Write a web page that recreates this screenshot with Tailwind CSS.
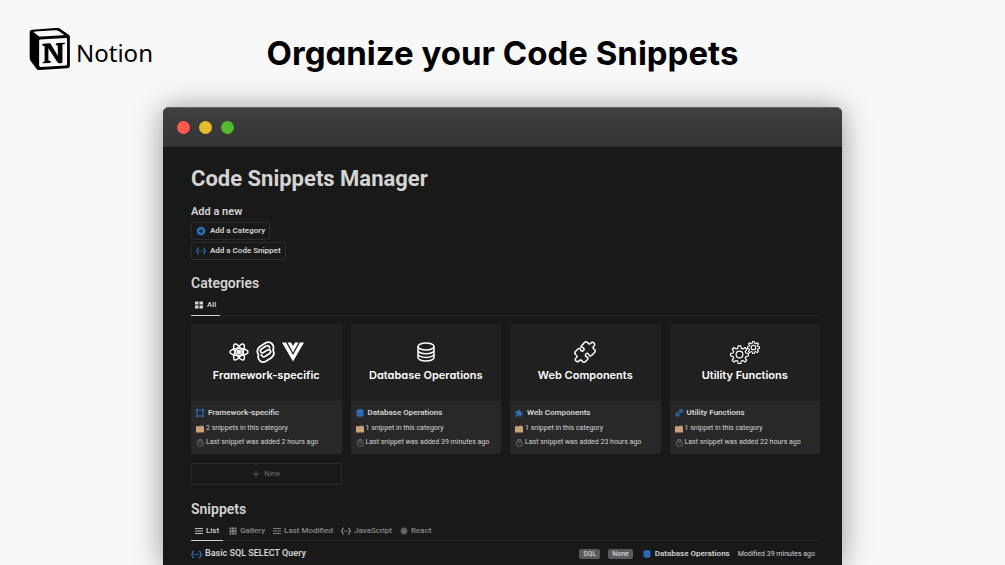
<!DOCTYPE html>
<html lang="en">
  <head>
    <meta charset="UTF-8" />
    <meta name="viewport" content="width=device-width, initial-scale=1.0" />
    <title>Organize your Code Snippets</title>
    <script src="https://cdn.jsdelivr.net/npm/@tailwindcss/browser@4"></script>
  </head>
  <body class="flex h-screen flex-col overflow-hidden bg-[#f8f8f8] font-['Roboto',sans-serif]">
    <!-- Shared icons -->
    <svg class="hidden">
      <symbol id="code" viewBox="0 0 20 16" fill="none" stroke="currentColor" stroke-width="2.400" stroke-linecap="round">
        <path d="M5 2C2 2 4 7 1 8c3 1 1 6 4 6M15 2c3 0 1 5 4 6-3 1-1 6-4 6M6.500 8h.5M10 8h.1M13 8h.5" />
      </symbol>
      <symbol id="list" viewBox="0 0 16 16" stroke="currentColor" stroke-width="1.800">
        <path d="M0 3h16M0 8h16M0 13h16" />
      </symbol>
      <symbol id="react" viewBox="0 0 32 32" fill="none" stroke="currentColor" stroke-width="2.400">
        <ellipse cx="16" cy="16" rx="14.500" ry="5.500" />
        <ellipse cx="16" cy="16" rx="14.500" ry="5.500" transform="rotate(60 16 16)" />
        <ellipse cx="16" cy="16" rx="14.500" ry="5.500" transform="rotate(120 16 16)" />
        <circle cx="16" cy="16" r="2.500" fill="currentColor" />
      </symbol>
      <symbol id="database" viewBox="0 0 18 20" fill="none" stroke="currentColor" stroke-width="1.500">
        <ellipse cx="9" cy="4.500" rx="8" ry="3.500" />
        <path d="M1 4.500v11C1 17.500 4.500 19 9 19s8-1.500 8-3.500v-11M1 8.200c0 2 3.500 3.500 8 3.500s8-1.500 8-3.500M1 11.900c0 2 3.500 3.500 8 3.500s8-1.500 8-3.500" />
      </symbol>
      <symbol id="database-solid" viewBox="0 0 14 16" fill="currentColor">
        <path d="M0 3c0-3.500 14-3.500 14 0v10c0 3.500-14 3.500-14 0z" />
      </symbol>
      <symbol id="puzzle" viewBox="0 0 24 24">
        <path d="M8 7c-2-7 8-7 6 0h5v5c6-2 6 8 0 6v5h-6c1-6-6-6-5 0H2v-5c4 1 4-7-1-6V7z" />
      </symbol>
      <symbol id="gear" viewBox="0 0 24 24" fill="none" stroke="currentColor" stroke-linejoin="round">
        <path d="M10.300 1h3.400l.6 3.200 2 .8L19 3.200 21.200 5.400 19.300 8.100l.8 2 3.100.5v3.300l-3.100.6-.8 2 1.900 2.700-2.300 2.300-2.700-1.900-2 .8-.5 3.100h-3.400l-.6-3.100-2-.8L5 21.500l-2.300-2.300 1.900-2.700-.8-2-3-.6v-3.300l3-.5.8-2L2.800 5.400 5 3.200 7.700 5l2-.8z" />
        <circle cx="12" cy="12" r="4.300" />
      </symbol>
      <symbol id="folder" viewBox="0 0 16 16">
        <path d="M1 2h5l1 1h2V1h5l1 3v3H1z" fill="#a58560" />
        <rect y="3" width="16" height="12" rx="1" fill="#c9a27a" />
      </symbol>
      <symbol id="clock" viewBox="0 0 16 16" fill="none" stroke="#777777" stroke-width="1.500">
        <rect x="3" y="4" width="11" height="10" rx="2" />
        <path d="M6 4V1h5v3M6 8h5" />
      </symbol>
    </svg>

    <!-- Page header -->
    <header class="grid h-[107px] shrink-0 grid-cols-[1fr_auto_1fr] items-center">
      <a href="#" class="flex items-center gap-[6px] self-start pt-7 pl-7 text-black">
        <svg class="h-[42px] w-[42px]" viewBox="0 0 100 100">
          <path d="M6 4.300 61.400.2c6.800-.6 8.500-.2 12.800 2.900l17.600 12.400c2.900 2.200 3.900 2.800 3.900 5.100v68.200c0 4.300-1.600 6.800-7 7.200l-64.300 3.900c-4.100.2-6-.4-8.200-3.100L3.200 79.900C.9 76.800 0 74.400 0 71.700V11.100C0 7.600 1.600 4.700 6 4.300" transform="translate(4 0)" />
          <path d="M29 27.500 89 23.800c3-.2 4 1 4 3.200v59c0 2-1 3-3 3.200L31 92.700c-3 .2-4.500-1-4.500-4V31c0-2 .5-3.300 2.500-3.500" fill="#f8f8f8" />
          <path d="M16 8.500 64 5.200c4-.3 6 0 9 2L85 15.500c1 1 .5 1.500-1 1.600L31 20.500c-3 .2-5-.5-7-2L14.500 11c-1-1-.5-2.300 1.500-2.500" fill="#f8f8f8" />
          <path d="M36 37.500 53 36.500 71 66V41.500L66 40.500c0-3 2-4.500 4.500-4.700L88 35v2.500l-6 2V82c-3 1.500-5 2-7 2-3 0-4-1-6-4L48.500 48v29.500l6.500 1.500s0 4-5 4.300L35 84c-.5-1 0-3 1.500-3.300l3-1.200V43L34 42.500c-.4-2 .5-4.800 2-5" />
        </svg>
        <span class="pt-2 font-['Noto_Sans',sans-serif] text-2xl">Notion</span>
      </a>
      <h1 class="font-['Inter',sans-serif] text-[33px] font-bold text-black [font-feature-settings:'cv11']">Organize your Code Snippets</h1>
    </header>

    <!-- App window -->
    <main class="mx-[163px] min-h-0 flex-1 rounded-t-md bg-[#191919] text-[#d4d4d4] shadow-[0_2px_30px_rgba(0,0,0,0.4)]">
      <div class="flex h-[41px] items-center gap-[9px] rounded-t-md border-t border-b border-t-[#666666] border-b-[#111111] bg-linear-to-b from-[#404040] to-[#333333] pl-[14px]">
        <span class="size-[13px] rounded-full bg-[#ff5a50]"></span>
        <span class="size-[13px] rounded-full bg-[#e5bd2c]"></span>
        <span class="size-[13px] rounded-full bg-[#53b92f]"></span>
      </div>

      <div class="pr-[22px] pl-7">
        <h2 class="pt-[17px] text-[22px] leading-7 font-bold">Code Snippets Manager</h2>

        <section class="flex flex-col items-start pt-[11px]">
          <h3 class="pb-[2px] text-[11px] leading-4 font-semibold">Add a new</h3>
          <button class="mb-[2px] flex h-[18px] items-center gap-1 rounded-xs border border-[#2d2d2d] px-1 text-[8px] font-semibold">
            <svg class="size-[10px]" viewBox="0 0 16 16"><circle cx="8" cy="8" r="7" fill="#2c6cb5" /><path d="M8 5v6M5 8h6" stroke="#191919" stroke-width="2" /></svg>
            Add a Category
          </button>
          <button class="flex h-[18px] items-center gap-1 rounded-xs border border-[#2d2d2d] px-1 text-[8px] font-semibold">
            <svg class="h-2 w-[10px] text-[#2c6cb5]"><use href="#code" /></svg>
            Add a Code Snippet
          </button>
        </section>

        <!-- Categories -->
        <section class="pt-[13px]">
          <h3 class="text-sm leading-5 font-semibold">Categories</h3>
          <nav class="mt-1 flex h-[19px] border-b border-[#272727]">
            <button class="flex h-[19px] items-center gap-1 border-b border-[#d4d4d4] px-1 pb-[3px] text-[8px] font-medium">
              <svg class="size-2" viewBox="0 0 16 16" fill="currentColor"><path d="M0 1h7v6H0zM9 1h7v6H9zM0 9h7v6H0zM9 9h7v6H9z" /></svg>
              All
            </button>
          </nav>

          <div class="mt-2 grid grid-cols-4 gap-[9px]">
            <article class="overflow-hidden rounded-xs bg-[#282828]">
              <div class="flex h-[77px] flex-col items-center bg-[#202020] pt-4 text-white">
                <div class="flex h-6 items-center gap-[7px]">
                  <svg class="size-5"><use href="#react" /></svg>
                  <svg class="h-[22px] w-[19px]" viewBox="0 0 38 44" fill="none" stroke="currentColor" stroke-width="3.500">
                    <path d="M34 18c4-11-6-19-15-14L8 11c-6 4-7 11-3 16-3 11 6 18 14 14l11-7c6-4 7-10 4-16z" />
                    <path d="M27 15c1-5-3-7-7-5L11 16c-5 4-1 9 4 7l8-5c5-2 9 3 4 7l-9 6c-4 2-8-1-7-5" />
                  </svg>
                  <svg class="h-5 w-[22px]" viewBox="0 0 44 40" fill="currentColor"><path d="M0 1h8l14 25L36 1h8L22 39z" /><path d="M11 1h7l4 7 4-7h7L22 21z" /></svg>
                </div>
                <p class="font-['Inter',sans-serif] text-[11px] leading-[22px] font-semibold [font-feature-settings:'cv11']">Framework-specific</p>
              </div>
              <div class="flex h-[53px] flex-col gap-[3px] px-[5px] pt-[5px] text-[7px]">
                <h4 class="flex items-center gap-1 text-[8px] leading-[14px] font-semibold">
                  <svg class="size-2" viewBox="0 0 16 16" fill="none" stroke="#2c6cb5" stroke-width="2"><rect x="2" y="2" width="12" height="12" /><path d="M0 2h4M12 2h4M0 14h4M12 14h4" stroke-width="4" /></svg>
                  Framework-specific
                </h4>
                <p class="flex items-center gap-[2px] leading-[11px]"><svg class="size-2"><use href="#folder" /></svg>2 snippets in this category</p>
                <p class="flex items-center gap-[2px] leading-[11px]"><svg class="size-2"><use href="#clock" /></svg>Last snippet was added 2 hours ago</p>
              </div>
            </article>

            <article class="overflow-hidden rounded-xs bg-[#282828]">
              <div class="flex h-[77px] flex-col items-center bg-[#202020] pt-4 text-white">
                <div class="flex h-6 items-center">
                  <svg class="h-5 w-[18px]"><use href="#database" /></svg>
                </div>
                <p class="font-['Inter',sans-serif] text-[11px] leading-[22px] font-semibold [font-feature-settings:'cv11']">Database Operations</p>
              </div>
              <div class="flex h-[53px] flex-col gap-[3px] px-[5px] pt-[5px] text-[7px]">
                <h4 class="flex items-center gap-1 text-[8px] leading-[14px] font-semibold">
                  <svg class="size-2 text-[#2c6cb5]"><use href="#database-solid" /></svg>
                  Database Operations
                </h4>
                <p class="flex items-center gap-[2px] leading-[11px]"><svg class="size-2"><use href="#folder" /></svg>1 snippet in this category</p>
                <p class="flex items-center gap-[2px] leading-[11px]"><svg class="size-2"><use href="#clock" /></svg>Last snippet was added 39 minutes ago</p>
              </div>
            </article>

            <article class="overflow-hidden rounded-xs bg-[#282828]">
              <div class="flex h-[77px] flex-col items-center bg-[#202020] pt-4 text-white">
                <div class="flex h-6 items-center">
                  <svg class="size-[22px]" viewBox="0 0 44 44" fill="none" stroke="currentColor" stroke-width="3" stroke-linejoin="round">
                    <path d="M14 11l7-8c2-2 4-2 6 0 2 3 4 4 6 2 2-3 5-3 7-1s2 5-1 7c-2 2-1 4 2 6 2 2 2 4 0 6l-6 6c-2 2-4 1-5-1-1-4-4-4-6-2s-2 5 2 6c2 1 3 3 1 5l-4 4c-2 2-4 2-6 0-2-3-4-4-6-2-2 3-5 3-7 1s-2-5 1-7c2-2 1-4-2-6-2-2-2-4 0-6l5-5c2-2 4-1 5 1 1 4 4 4 6 2s2-5-2-6c-2-1-4-1-3-2z" />
                  </svg>
                </div>
                <p class="font-['Inter',sans-serif] text-[11px] leading-[22px] font-semibold [font-feature-settings:'cv11']">Web Components</p>
              </div>
              <div class="flex h-[53px] flex-col gap-[3px] px-[5px] pt-[5px] text-[7px]">
                <h4 class="flex items-center gap-1 text-[8px] leading-[14px] font-semibold">
                  <svg class="size-2 text-[#2c6cb5]" fill="currentColor"><use href="#puzzle" /></svg>
                  Web Components
                </h4>
                <p class="flex items-center gap-[2px] leading-[11px]"><svg class="size-2"><use href="#folder" /></svg>1 snippet in this category</p>
                <p class="flex items-center gap-[2px] leading-[11px]"><svg class="size-2"><use href="#clock" /></svg>Last snippet was added 23 hours ago</p>
              </div>
            </article>

            <article class="overflow-hidden rounded-xs bg-[#282828]">
              <div class="flex h-[77px] flex-col items-center bg-[#202020] pt-4 text-white">
                <div class="flex h-6 items-center">
                  <svg class="h-6 w-[30px]" viewBox="0 0 30 24" stroke-width="1.500">
                    <use href="#gear" x="0" y="5" width="19" height="19" />
                    <use href="#gear" x="17" y="1" width="13" height="13" stroke-width="2" />
                  </svg>
                </div>
                <p class="font-['Inter',sans-serif] text-[11px] leading-[22px] font-semibold [font-feature-settings:'cv11']">Utility Functions</p>
              </div>
              <div class="flex h-[53px] flex-col gap-[3px] px-[5px] pt-[5px] text-[7px]">
                <h4 class="flex items-center gap-1 text-[8px] leading-[14px] font-semibold">
                  <svg class="size-2" viewBox="0 0 16 16" fill="none" stroke="#2c6cb5" stroke-width="3"><circle cx="5" cy="11" r="3" /><circle cx="12" cy="4" r="2.500" /></svg>
                  Utility Functions
                </h4>
                <p class="flex items-center gap-[2px] leading-[11px]"><svg class="size-2"><use href="#folder" /></svg>1 snippet in this category</p>
                <p class="flex items-center gap-[2px] leading-[11px]"><svg class="size-2"><use href="#clock" /></svg>Last snippet was added 22 hours ago</p>
              </div>
            </article>

            <button class="flex h-[22px] items-center justify-center gap-1 border border-[#2a2a2a] text-[8px] text-[#6b6b6b]">
              <svg class="size-2" viewBox="0 0 16 16" stroke="currentColor" stroke-width="1.500"><path d="M8 1v14M1 8h14" /></svg>
              New
            </button>
          </div>
        </section>

        <!-- Snippets -->
        <section class="pt-[14px]">
          <h3 class="text-sm leading-5 font-semibold">Snippets</h3>
          <nav class="mt-[2px] flex h-5 gap-1 border-b border-[#272727] text-[8px] font-medium text-[#8a8a8a]">
            <button class="flex h-5 items-center gap-[3px] border-b border-[#d4d4d4] px-1 text-[#d4d4d4]">
              <svg class="size-2"><use href="#list" /></svg>List
            </button>
            <button class="flex items-center gap-[3px] px-[2px]">
              <svg class="size-2" viewBox="0 0 16 16" fill="currentColor"><path d="M1 1h4v4H1zM6 1h4v4H6zM11 1h4v4h-4zM1 6h4v4H1zM6 6h4v4H6zM11 6h4v4h-4zM1 11h4v4H1zM6 11h4v4H6zM11 11h4v4h-4z" /></svg>Gallery
            </button>
            <button class="flex items-center gap-[3px] px-[2px]">
              <svg class="size-2"><use href="#list" /></svg>Last Modified
            </button>
            <button class="flex items-center gap-[3px] px-[2px]">
              <svg class="h-2 w-[10px]"><use href="#code" /></svg>JavaScript
            </button>
            <button class="flex items-center gap-[3px] px-[2px]">
              <svg class="size-2"><use href="#react" /></svg>React
            </button>
          </nav>
          <div class="flex h-[26px] items-center justify-between pr-[5px]">
            <a href="#" class="flex items-center gap-[3px] text-[9px] font-semibold">
              <svg class="h-[9px] w-[11px] text-[#2c6cb5]"><use href="#code" /></svg>
              Basic SQL SELECT Query
            </a>
            <div class="flex items-center gap-2 text-[7px] font-medium">
              <span class="rounded-xs bg-[#5a5a5a] px-1 leading-[10px]">SQL</span>
              <span class="rounded-xs bg-[#5a5a5a] px-1 leading-[10px]">None</span>
              <a href="#" class="flex items-center gap-1 pl-[2px] text-[8px] font-semibold">
                <svg class="size-2 text-[#2c6cb5]"><use href="#database-solid" /></svg>
                Database Operations
              </a>
              <span class="font-normal">Modified 39 minutes ago</span>
            </div>
          </div>
        </section>
      </div>
    </main>
  </body>
</html>
